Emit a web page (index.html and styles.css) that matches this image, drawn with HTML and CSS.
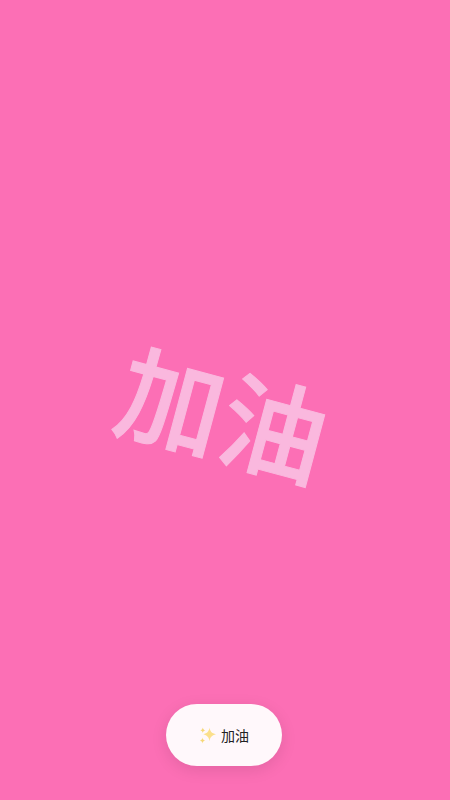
FILE: index.html
```html
<!DOCTYPE html>
<html lang="zh-CN">
<head>
  <meta charset="UTF-8">
  <meta name="viewport" content="width=device-width, initial-scale=1.0">
  <title>加油</title>
  <link rel="stylesheet" href="styles.css">
</head>
<body>

  <div class="stage">
    <div class="big-word">加油</div>
  </div>

  <div class="bottom-bar">
    <button class="cheer-btn" type="button">
      <svg class="sparkles" viewBox="0 0 18 18" aria-hidden="true">
        <path fill="#fbe08c" d="M10.500 1.500c.7 4 2 5.600 6.500 6.800-4.500 1.200-5.800 2.800-6.500 7-.7-4.200-2-5.800-6.200-7 4.200-1.200 5.500-2.800 6.200-6.800z"/>
        <path fill="#f6d878" d="M3.800 1.500c.3 1.700.9 2.300 2.500 2.800-1.600.5-2.200 1.100-2.500 2.800-.3-1.700-.9-2.300-2.500-2.800 1.600-.5 2.200-1.100 2.500-2.800z"/>
        <path fill="#f6d878" d="M3.500 11.500c.3 1.900.9 2.500 2.500 3-1.600.5-2.200 1.100-2.500 3-.3-1.900-.9-2.500-2.500-3 1.600-.5 2.200-1.100 2.500-3z"/>
      </svg>
      <span>加油</span>
    </button>
  </div>

</body>
</html>
```

FILE: styles.css
```css
* {
  margin: 0;
  padding: 0;
  box-sizing: border-box;
}
body {
  font-family: "Noto Sans CJK SC", "Noto Sans", sans-serif;
  background-color: #fc6fb5;
  display: flex;
  flex-direction: column;
  height: 100vh;
  overflow: hidden;
}
.stage {
  flex: 1;
  display: flex;
  justify-content: center;
  align-items: center;
  padding-top: 118px;
  padding-right: 3px;
}
.big-word {
  font-size: 106px;
  font-weight: 500;
  line-height: 1.2;
  color: #fab8de;
  -webkit-text-stroke: 1px #fab8de;
  transform: rotate(15deg);
}
.bottom-bar {
  display: flex;
  justify-content: center;
  padding-bottom: 34px;
  padding-right: 2px;
}
.cheer-btn {
  display: flex;
  align-items: center;
  justify-content: center;
  gap: 4px;
  width: 116px;
  height: 62px;
  border: none;
  border-radius: 31px;
  background-color: #fff8fb;
  color: #222;
  font-family: inherit;
  font-size: 14px;
  box-shadow: 0 4px 16px rgba(0, 0, 0, 0.1);
}
.sparkles {
  width: 18px;
  height: 18px;
}
```
